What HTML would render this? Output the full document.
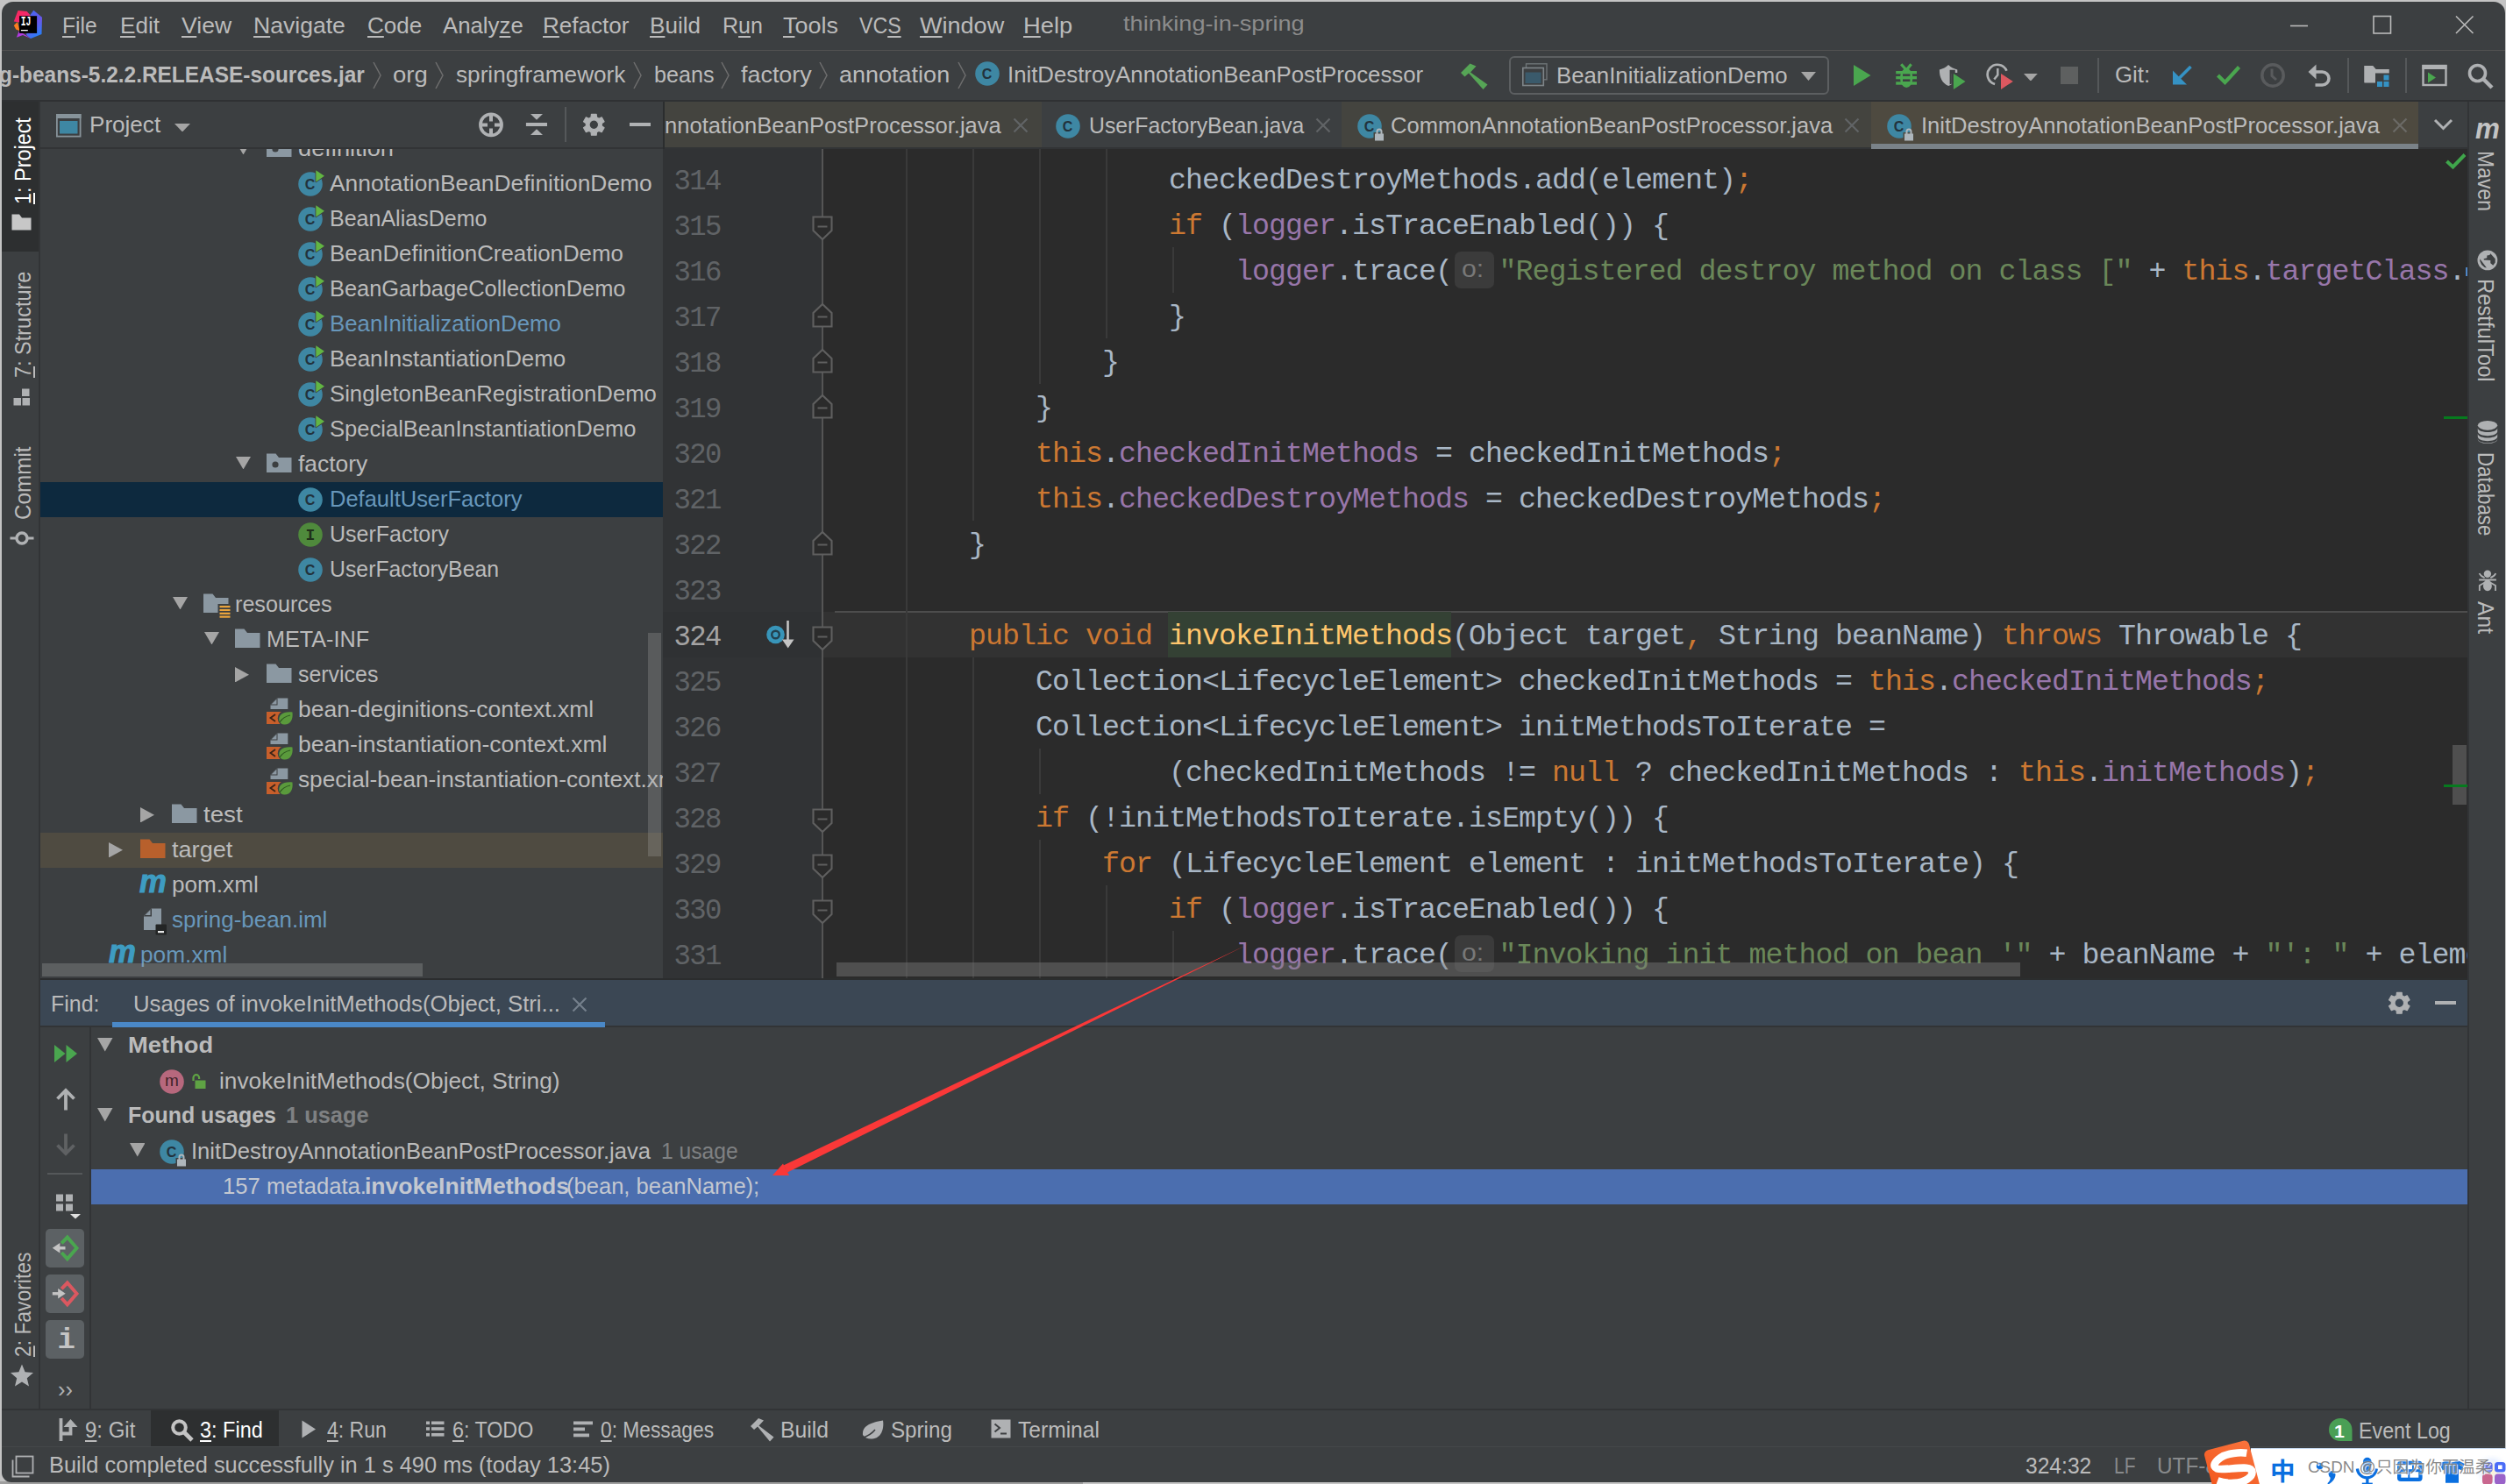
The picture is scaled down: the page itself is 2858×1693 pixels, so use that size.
<!DOCTYPE html>
<html lang="en"><head><meta charset="utf-8"><title>thinking-in-spring</title><style>
html,body{margin:0;padding:0;}
body{width:2858px;height:1693px;overflow:hidden;background:#c4c4c4;position:relative;font-family:'Liberation Sans', sans-serif;}
#root{position:absolute;left:0;top:0;width:2858px;height:1693px;overflow:hidden;}
#root div,#root svg,#root span.t{position:absolute;}
span.t{white-space:pre;line-height:1;transform-origin:0 0;}
span.t u{text-decoration-thickness:1.5px;text-underline-offset:3px;}
div.c{white-space:pre;font-family:'Liberation Mono', monospace;font-size:33.3px;letter-spacing:-0.9833px;line-height:52px;height:52px;color:#a9b7c6;}
div.c span{position:static;}
</style></head>
<body><div id="root">
<div style="left:0px;top:1690px;width:1235px;height:3px;background:#9e9e9e;"></div>
<div style="left:2px;top:2px;width:2855px;height:1689px;background:#3c3f41;border-radius:13px 13px 0 11px;"></div>
<div style="left:2px;top:57px;width:2855px;height:1px;background:#515151;"></div>
<div style="left:2px;top:114px;width:2855px;height:2px;background:#2f3133;"></div>
<span class="t" style="left:71.3px;top:15.99px;font-size:26px;color:#bbbbbb;font-family:'Liberation Sans', sans-serif;transform:scaleX(0.9452);"><u>F</u>ile</span>
<span class="t" style="left:136.8px;top:15.99px;font-size:26px;color:#bbbbbb;font-family:'Liberation Sans', sans-serif;transform:scaleX(1.0044);"><u>E</u>dit</span>
<span class="t" style="left:206.8px;top:15.99px;font-size:26px;color:#bbbbbb;font-family:'Liberation Sans', sans-serif;transform:scaleX(1.0214);"><u>V</u>iew</span>
<span class="t" style="left:288.8px;top:15.99px;font-size:26px;color:#bbbbbb;font-family:'Liberation Sans', sans-serif;transform:scaleX(1.0214);"><u>N</u>avigate</span>
<span class="t" style="left:418.8px;top:15.99px;font-size:26px;color:#bbbbbb;font-family:'Liberation Sans', sans-serif;transform:scaleX(1.0032);"><u>C</u>ode</span>
<span class="t" style="left:504.8px;top:15.99px;font-size:26px;color:#bbbbbb;font-family:'Liberation Sans', sans-serif;transform:scaleX(0.9914);">Analy<u>z</u>e</span>
<span class="t" style="left:618.8px;top:15.99px;font-size:26px;color:#bbbbbb;font-family:'Liberation Sans', sans-serif;transform:scaleX(1.0020);"><u>R</u>efactor</span>
<span class="t" style="left:741.3px;top:15.99px;font-size:26px;color:#bbbbbb;font-family:'Liberation Sans', sans-serif;transform:scaleX(1.0034);"><u>B</u>uild</span>
<span class="t" style="left:823.8px;top:15.99px;font-size:26px;color:#bbbbbb;font-family:'Liberation Sans', sans-serif;transform:scaleX(0.9625);">R<u>u</u>n</span>
<span class="t" style="left:892.8px;top:15.99px;font-size:26px;color:#bbbbbb;font-family:'Liberation Sans', sans-serif;transform:scaleX(1.0361);"><u>T</u>ools</span>
<span class="t" style="left:979.8px;top:15.99px;font-size:26px;color:#bbbbbb;font-family:'Liberation Sans', sans-serif;transform:scaleX(0.8906);">VC<u>S</u></span>
<span class="t" style="left:1049.3px;top:15.99px;font-size:26px;color:#bbbbbb;font-family:'Liberation Sans', sans-serif;transform:scaleX(1.0402);"><u>W</u>indow</span>
<span class="t" style="left:1167.3px;top:15.99px;font-size:26px;color:#bbbbbb;font-family:'Liberation Sans', sans-serif;transform:scaleX(1.0509);"><u>H</u>elp</span>
<span class="t" style="left:1280.8px;top:15.26px;font-size:24.5px;color:#8c8c8c;font-family:'Liberation Sans', sans-serif;transform:scaleX(1.1080);">thinking-in-spring</span>
<svg style="left:2604px;top:10px;" width="230" height="38" viewBox="0 0 230 38"><g stroke="#bbbbbb" stroke-width="1.6" fill="none"><path d="M8 19.5H28"/><rect x="103" y="8.5" width="19.5" height="19.5"/><path d="M197 8.5L216.5 28M216.5 8.5L197 28"/></g></svg>
<svg style="left:14px;top:9px;" width="38" height="38" viewBox="0 0 38 38"><defs><linearGradient id="lg1" x1="0" y1="0" x2="1" y2="1"><stop offset="0" stop-color="#fe2857"/><stop offset="1" stop-color="#e6287f"/></linearGradient><linearGradient id="lg2" x1="0" y1="0" x2="0.4" y2="1"><stop offset="0" stop-color="#3b6cf2"/><stop offset="0.6" stop-color="#6a56e8"/><stop offset="1" stop-color="#2e7bf5"/></linearGradient></defs><path d="M6.5 3L16.7 4L21.5 9.5L8 16.5L1.8 15.5Z" fill="url(#lg1)"/><path d="M1.8 20.1L6 15.9L8.5 26.2L4.2 24.4Z" fill="#fc7e1f"/><path d="M24.3 2.8L34 10.8L33.5 30L21 35L16 31L20.5 8Z" fill="url(#lg2)"/><path d="M4.8 33.7L7.8 26.2L21.2 34.9L12 31Z" fill="#b13be0"/><rect x="8.1" y="9.2" width="20" height="19.7" fill="#000000"/><text x="9.7" y="20.1" font-family="Liberation Mono, monospace" font-weight="700" font-size="14" fill="#ffffff" textLength="11.8" lengthAdjust="spacingAndGlyphs">IJ</text><rect x="9.9" y="25" width="7.9" height="1.3" fill="#ffffff"/></svg>
<span class="t" style="left:-1.2px;top:71.99px;font-size:26px;color:#bbbbbb;font-family:'Liberation Sans', sans-serif;font-weight:700;transform:scaleX(0.9396);">g-beans-5.2.2.RELEASE-sources.jar</span>
<span class="t" style="left:447.8px;top:71.99px;font-size:26px;color:#bbbbbb;font-family:'Liberation Sans', sans-serif;transform:scaleX(1.0579);">org</span>
<span class="t" style="left:519.8px;top:71.99px;font-size:26px;color:#bbbbbb;font-family:'Liberation Sans', sans-serif;transform:scaleX(1.0062);">springframework</span>
<span class="t" style="left:745.8px;top:71.99px;font-size:26px;color:#bbbbbb;font-family:'Liberation Sans', sans-serif;transform:scaleX(0.9676);">beans</span>
<span class="t" style="left:845.3px;top:71.99px;font-size:26px;color:#bbbbbb;font-family:'Liberation Sans', sans-serif;transform:scaleX(1.0346);">factory</span>
<span class="t" style="left:957.3px;top:71.99px;font-size:26px;color:#bbbbbb;font-family:'Liberation Sans', sans-serif;transform:scaleX(1.0388);">annotation</span>
<span class="t" style="left:1148.8px;top:71.99px;font-size:26px;color:#bbbbbb;font-family:'Liberation Sans', sans-serif;transform:scaleX(0.9910);">InitDestroyAnnotationBeanPostProcessor</span>
<svg style="left:424px;top:70px;" width="12" height="32" viewBox="0 0 12 32"><path d="M2 1L10 16L2 31" stroke="#6e6e6e" stroke-width="1.5" fill="none"/></svg>
<svg style="left:495px;top:70px;" width="12" height="32" viewBox="0 0 12 32"><path d="M2 1L10 16L2 31" stroke="#6e6e6e" stroke-width="1.5" fill="none"/></svg>
<svg style="left:721px;top:70px;" width="12" height="32" viewBox="0 0 12 32"><path d="M2 1L10 16L2 31" stroke="#6e6e6e" stroke-width="1.5" fill="none"/></svg>
<svg style="left:821px;top:70px;" width="12" height="32" viewBox="0 0 12 32"><path d="M2 1L10 16L2 31" stroke="#6e6e6e" stroke-width="1.5" fill="none"/></svg>
<svg style="left:933px;top:70px;" width="12" height="32" viewBox="0 0 12 32"><path d="M2 1L10 16L2 31" stroke="#6e6e6e" stroke-width="1.5" fill="none"/></svg>
<svg style="left:1091px;top:70px;" width="12" height="32" viewBox="0 0 12 32"><path d="M2 1L10 16L2 31" stroke="#6e6e6e" stroke-width="1.5" fill="none"/></svg>
<svg style="left:1106.0px;top:64.0px;" width="40" height="40" viewBox="0 0 40 40"><circle cx="20.0" cy="20.0" r="13.8" fill="#3e87a3"/><text x="19.6" y="25.7" text-anchor="middle" font-family="Liberation Sans, sans-serif" font-size="16" fill="#22323c" font-weight="700">C</text></svg>
<svg style="left:1664px;top:70px;" width="36" height="32" viewBox="0 0 36 32"><g transform="translate(1.5,2)"><path d="M0.5 11L11 0.5L18 3.5L11.5 10.5L31 24.5L26 30L9.5 11.5L5 15.5Z" fill="#56a556"/></g></svg>
<div style="left:1720.5px;top:64px;width:365px;height:44px;border:2px solid #5c5f61;border-radius:6px;box-sizing:border-box;"></div>
<svg style="left:1736px;top:72px;" width="30" height="28" viewBox="0 0 30 28"><rect x="4.5" y="0.8" width="23.5" height="18" fill="none" stroke="#6e7477" stroke-width="1.4"/><rect x="0.8" y="5.5" width="23.5" height="20" fill="#3c3f41" stroke="#7e8589" stroke-width="1.6"/><rect x="3.5" y="10.5" width="18" height="12.5" fill="#3a5a6b"/></svg>
<span class="t" style="left:1774.8px;top:72.99px;font-size:26px;color:#bbbbbb;font-family:'Liberation Sans', sans-serif;transform:scaleX(0.9914);">BeanInitializationDemo</span>
<svg style="left:2054px;top:82.0px;" width="17" height="10" viewBox="0 0 17 10"><path d="M0 0H17L8.5 10Z" fill="#a5a5a5"/></svg>
<svg style="left:2112px;top:72px;" width="24" height="28" viewBox="0 0 24 28"><path d="M2 2L21.5 14L2 26Z" fill="#4aa64f"/></svg>
<svg style="left:2160px;top:70px;" width="30" height="32" viewBox="0 0 30 32"><g fill="#4aa64f"><ellipse cx="14.2" cy="19" rx="7.2" ry="11.1"/><rect x="2.2" y="11" width="23.8" height="3.3"/><rect x="2.2" y="17" width="23.8" height="3.3"/><rect x="2.2" y="23.300" width="23.800" height="3.400"/><path d="M8.2 3.2L13.6 9.2M19.6 3.2L14.8 9.2" stroke="#4aa64f" stroke-width="3.2"/></g><rect x="10" y="14.4" width="8.4" height="2.5" fill="#3c3f41"/><rect x="10" y="20.4" width="8.4" height="2.6" fill="#3c3f41"/></svg>
<svg style="left:2210px;top:70px;" width="34" height="34" viewBox="0 0 34 34"><path d="M1.9 9.5C6 8.5 9 7 12.1 4.1C15 7 18.5 8.5 22.3 9.5V13H15.5V26.500L12.1 28.1C5 24.5 1.9 19 1.9 9.5Z" fill="#afb1b3"/><path d="M13.6 9.8H19.8V14H15.800V25.500L13.600 26.600Z" fill="#3c3f41"/><path d="M17.9 13.9L31.5 22.9L17.9 31.900Z" fill="#4aa64f" stroke="#3c3f41" stroke-width="1.6" paint-order="stroke"/></svg>
<svg style="left:2264px;top:70px;" width="34" height="34" viewBox="0 0 34 34"><path d="M24.48 10.87A11.3 11.3 0 1 0 11.08 26.01" stroke="#afb1b3" stroke-width="2.7" fill="none"/><path d="M14.3 8V15.5L10.300 20.500" stroke="#afb1b3" stroke-width="2.500" fill="none"/><path d="M18 13.900L31.800 22.900L18 31.900Z" fill="#db5860" stroke="#3c3f41" stroke-width="1.600" paint-order="stroke"/></svg>
<svg style="left:2307.8px;top:83.9px;" width="15.8" height="8.6" viewBox="0 0 15.8 8.6"><path d="M0 0H15.8L7.9 8.6Z" fill="#a5a5a5"/></svg>
<div style="left:2349.7px;top:76px;width:20px;height:20px;background:#5e6060;"></div>
<div style="left:2392px;top:66px;width:2px;height:40px;background:#55585a;"></div>
<span class="t" style="left:2411.8px;top:71.99px;font-size:26px;color:#bbbbbb;font-family:'Liberation Sans', sans-serif;transform:scaleX(0.9925);">Git:</span>
<svg style="left:2476px;top:72px;" width="28" height="28" viewBox="0 0 28 28"><path d="M22.5 4L6 20.5" stroke="#3592c4" stroke-width="3.6" fill="none"/><path d="M2 8.5V24.5H18Z" fill="#3592c4"/></svg>
<svg style="left:2526px;top:72px;" width="32" height="28" viewBox="0 0 32 28"><path d="M3.5 14L11.5 22L27.5 4.5" stroke="#4aa64f" stroke-width="4.2" fill="none"/></svg>
<svg style="left:2576px;top:70px;" width="32" height="32" viewBox="0 0 32 32"><circle cx="16" cy="16" r="12.2" stroke="#595b5d" stroke-width="3.5" fill="none"/><path d="M15 8.5V16.500L20 21" stroke="#595b5d" stroke-width="3" fill="none"/></svg>
<svg style="left:2630px;top:70px;" width="32" height="32" viewBox="0 0 32 32"><path d="M7 12H18.500A7.500 7.500 0 0 1 18.500 27H10.500" stroke="#afb1b3" stroke-width="3.6" fill="none"/><path d="M2.5 12L11.5 3.5V20.5Z" fill="#afb1b3"/></svg>
<div style="left:2677px;top:66px;width:2px;height:40px;background:#55585a;"></div>
<svg style="left:2695px;top:72px;" width="32" height="30" viewBox="0 0 32 30"><path d="M1.5 3H11L14.5 7H29.5V12H14V22H1.5Z" fill="#afb1b3"/><path d="M1.5 3H11L14.5 7H29.5V22.5H1.5Z" fill="#afb1b3"/><rect x="14" y="11.5" width="17" height="17" fill="#3c3f41"/><rect x="23.5" y="13.5" width="6" height="6" fill="#3592c4"/><rect x="16" y="21" width="6" height="6" fill="#3592c4"/><rect x="23.5" y="21" width="6" height="6" fill="#3592c4"/></svg>
<div style="left:2742.5px;top:66px;width:2px;height:40px;background:#55585a;"></div>
<svg style="left:2761px;top:72px;" width="32" height="28" viewBox="0 0 32 28"><rect x="2.5" y="3" width="26" height="22" fill="none" stroke="#afb1b3" stroke-width="2.4"/><rect x="1.5" y="2" width="28" height="5" fill="#afb1b3"/><path d="M8 10.5L17 16.5L8 22.5Z" fill="#4aa64f"/></svg>
<svg style="left:2812px;top:70px;" width="34" height="34" viewBox="0 0 34 34"><circle cx="13.5" cy="13.5" r="9" stroke="#afb1b3" stroke-width="3.6" fill="none"/><path d="M20 20L30 30" stroke="#afb1b3" stroke-width="4.4"/></svg>
<div style="left:2px;top:116px;width:42px;height:171px;background:#2d2f30;"></div>
<div style="left:44px;top:116px;width:2px;height:1491px;background:#323436;"></div>
<span class="t" style="left:13.0px;top:233px;font-size:26px;color:#ffffff;font-family:'Liberation Sans', sans-serif;transform:rotate(-90deg) scaleX(0.9000);"><u>1</u>: Project</span>
<svg style="left:13px;top:243.5px;" width="24" height="20" viewBox="0 0 24 20"><path d="M0.5 0.5H9L12 4.5H22.5V18.5H0.5Z" fill="#c7c7c7"/></svg>
<span class="t" style="left:13.0px;top:431px;font-size:26px;color:#bbbbbb;font-family:'Liberation Sans', sans-serif;transform:rotate(-90deg) scaleX(0.9030);"><u>7</u>: Structure</span>
<svg style="left:15px;top:443px;" width="20" height="20" viewBox="0 0 20 20"><rect x="10" y="0.5" width="8.5" height="8.5" fill="#afb1b3"/><rect x="0.5" y="11" width="8.5" height="8.5" fill="#afb1b3"/><rect x="10.5" y="11" width="8.5" height="8.5" fill="#afb1b3"/></svg>
<span class="t" style="left:13.0px;top:593px;font-size:26px;color:#bbbbbb;font-family:'Liberation Sans', sans-serif;transform:rotate(-90deg) scaleX(0.9333);">Commit</span>
<svg style="left:11px;top:604px;" width="28" height="20" viewBox="0 0 28 20"><circle cx="14" cy="10" r="6" stroke="#afb1b3" stroke-width="3.4" fill="none"/><path d="M0.5 10H7M21 10H27.5" stroke="#afb1b3" stroke-width="3"/></svg>
<span class="t" style="left:13.0px;top:1548px;font-size:26px;color:#bbbbbb;font-family:'Liberation Sans', sans-serif;transform:rotate(-90deg) scaleX(0.8787);"><u>2</u>: Favorites</span>
<svg style="left:11px;top:1556px;" width="28" height="26" viewBox="0 0 28 26"><path d="M14 0.5L17.6 9.3L27 10L19.8 16.2L22 25.5L14 20.5L6 25.5L8.2 16.2L1 10L10.4 9.3Z" fill="#afb1b3"/></svg>
<div style="left:46px;top:550px;width:710px;height:40px;background:#0d293e;"></div>
<div style="left:46px;top:950px;width:710px;height:40px;background:#4f4b41;"></div>
<svg style="left:269px;top:161.75px;" width="17" height="14.5" viewBox="0 0 17 14.5"><path d="M0 0H17L8.5 14.5Z" fill="#a5a5a5"/></svg>
<svg style="left:304px;top:155.3px;" width="34" height="34" viewBox="0 0 34 34"><path d="M0 2.5H10.5L14 7H28.5V24H0Z" fill="#8b98a2"/><circle cx="10" cy="15" r="3.6" fill="#3c3f41"/></svg>
<span class="t" style="left:339.8px;top:157.04px;font-size:25.7px;color:#bbbbbb;font-family:'Liberation Sans', sans-serif;transform:scaleX(1.0602);">definition</span>
<svg style="left:334.0px;top:190.0px;" width="40" height="40" viewBox="0 0 40 40"><circle cx="20.0" cy="20.0" r="13.8" fill="#3e87a3"/><text x="19.6" y="25.7" text-anchor="middle" font-family="Liberation Sans, sans-serif" font-size="16" fill="#22323c" font-weight="700">C</text><path d="M26.3 4.199999999999999L36.0 10.8L26.3 17.4Z" fill="#62b543" stroke="#3c3f41" stroke-width="1.6" stroke-linejoin="round" paint-order="stroke"/></svg>
<span class="t" style="left:375.8px;top:197.04px;font-size:25.7px;color:#bbbbbb;font-family:'Liberation Sans', sans-serif;transform:scaleX(1.0257);">AnnotationBeanDefinitionDemo</span>
<svg style="left:334.0px;top:230.0px;" width="40" height="40" viewBox="0 0 40 40"><circle cx="20.0" cy="20.0" r="13.8" fill="#3e87a3"/><text x="19.6" y="25.7" text-anchor="middle" font-family="Liberation Sans, sans-serif" font-size="16" fill="#22323c" font-weight="700">C</text><path d="M26.3 4.199999999999999L36.0 10.8L26.3 17.4Z" fill="#62b543" stroke="#3c3f41" stroke-width="1.6" stroke-linejoin="round" paint-order="stroke"/></svg>
<span class="t" style="left:375.8px;top:237.04px;font-size:25.7px;color:#bbbbbb;font-family:'Liberation Sans', sans-serif;transform:scaleX(0.9739);">BeanAliasDemo</span>
<svg style="left:334.0px;top:270.0px;" width="40" height="40" viewBox="0 0 40 40"><circle cx="20.0" cy="20.0" r="13.8" fill="#3e87a3"/><text x="19.6" y="25.7" text-anchor="middle" font-family="Liberation Sans, sans-serif" font-size="16" fill="#22323c" font-weight="700">C</text><path d="M26.3 4.199999999999999L36.0 10.8L26.3 17.4Z" fill="#62b543" stroke="#3c3f41" stroke-width="1.6" stroke-linejoin="round" paint-order="stroke"/></svg>
<span class="t" style="left:375.8px;top:277.04px;font-size:25.7px;color:#bbbbbb;font-family:'Liberation Sans', sans-serif;transform:scaleX(1.0066);">BeanDefinitionCreationDemo</span>
<svg style="left:334.0px;top:310.0px;" width="40" height="40" viewBox="0 0 40 40"><circle cx="20.0" cy="20.0" r="13.8" fill="#3e87a3"/><text x="19.6" y="25.7" text-anchor="middle" font-family="Liberation Sans, sans-serif" font-size="16" fill="#22323c" font-weight="700">C</text><path d="M26.3 4.199999999999999L36.0 10.8L26.3 17.4Z" fill="#62b543" stroke="#3c3f41" stroke-width="1.6" stroke-linejoin="round" paint-order="stroke"/></svg>
<span class="t" style="left:375.8px;top:317.04px;font-size:25.7px;color:#bbbbbb;font-family:'Liberation Sans', sans-serif;transform:scaleX(0.9889);">BeanGarbageCollectionDemo</span>
<svg style="left:334.0px;top:350.0px;" width="40" height="40" viewBox="0 0 40 40"><circle cx="20.0" cy="20.0" r="13.8" fill="#3e87a3"/><text x="19.6" y="25.7" text-anchor="middle" font-family="Liberation Sans, sans-serif" font-size="16" fill="#22323c" font-weight="700">C</text><path d="M26.3 4.199999999999999L36.0 10.8L26.3 17.4Z" fill="#62b543" stroke="#3c3f41" stroke-width="1.6" stroke-linejoin="round" paint-order="stroke"/></svg>
<span class="t" style="left:375.8px;top:357.04px;font-size:25.7px;color:#6897bb;font-family:'Liberation Sans', sans-serif;transform:scaleX(1.0046);">BeanInitializationDemo</span>
<svg style="left:334.0px;top:390.0px;" width="40" height="40" viewBox="0 0 40 40"><circle cx="20.0" cy="20.0" r="13.8" fill="#3e87a3"/><text x="19.6" y="25.7" text-anchor="middle" font-family="Liberation Sans, sans-serif" font-size="16" fill="#22323c" font-weight="700">C</text><path d="M26.3 4.199999999999999L36.0 10.8L26.3 17.4Z" fill="#62b543" stroke="#3c3f41" stroke-width="1.6" stroke-linejoin="round" paint-order="stroke"/></svg>
<span class="t" style="left:375.8px;top:397.04px;font-size:25.7px;color:#bbbbbb;font-family:'Liberation Sans', sans-serif;transform:scaleX(1.0082);">BeanInstantiationDemo</span>
<svg style="left:334.0px;top:430.0px;" width="40" height="40" viewBox="0 0 40 40"><circle cx="20.0" cy="20.0" r="13.8" fill="#3e87a3"/><text x="19.6" y="25.7" text-anchor="middle" font-family="Liberation Sans, sans-serif" font-size="16" fill="#22323c" font-weight="700">C</text><path d="M26.3 4.199999999999999L36.0 10.8L26.3 17.4Z" fill="#62b543" stroke="#3c3f41" stroke-width="1.6" stroke-linejoin="round" paint-order="stroke"/></svg>
<span class="t" style="left:375.8px;top:437.04px;font-size:25.7px;color:#bbbbbb;font-family:'Liberation Sans', sans-serif;transform:scaleX(1.0005);">SingletonBeanRegistrationDemo</span>
<svg style="left:334.0px;top:470.0px;" width="40" height="40" viewBox="0 0 40 40"><circle cx="20.0" cy="20.0" r="13.8" fill="#3e87a3"/><text x="19.6" y="25.7" text-anchor="middle" font-family="Liberation Sans, sans-serif" font-size="16" fill="#22323c" font-weight="700">C</text><path d="M26.3 4.199999999999999L36.0 10.8L26.3 17.4Z" fill="#62b543" stroke="#3c3f41" stroke-width="1.6" stroke-linejoin="round" paint-order="stroke"/></svg>
<span class="t" style="left:375.8px;top:477.04px;font-size:25.7px;color:#bbbbbb;font-family:'Liberation Sans', sans-serif;transform:scaleX(0.9949);">SpecialBeanInstantiationDemo</span>
<svg style="left:269px;top:520.75px;" width="17" height="14.5" viewBox="0 0 17 14.5"><path d="M0 0H17L8.5 14.5Z" fill="#a5a5a5"/></svg>
<svg style="left:304px;top:515.3px;" width="34" height="34" viewBox="0 0 34 34"><path d="M0 2.5H10.5L14 7H28.5V24H0Z" fill="#8b98a2"/><circle cx="10" cy="15" r="3.6" fill="#3c3f41"/></svg>
<span class="t" style="left:339.8px;top:517.04px;font-size:25.7px;color:#bbbbbb;font-family:'Liberation Sans', sans-serif;transform:scaleX(1.0286);">factory</span>
<svg style="left:334.0px;top:550.0px;" width="40" height="40" viewBox="0 0 40 40"><circle cx="20.0" cy="20.0" r="13.8" fill="#3e87a3"/><text x="19.6" y="25.7" text-anchor="middle" font-family="Liberation Sans, sans-serif" font-size="16" fill="#22323c" font-weight="700">C</text></svg>
<span class="t" style="left:375.8px;top:557.04px;font-size:25.7px;color:#6897bb;font-family:'Liberation Sans', sans-serif;transform:scaleX(0.9919);">DefaultUserFactory</span>
<svg style="left:334.0px;top:590.0px;" width="40" height="40" viewBox="0 0 40 40"><circle cx="20.0" cy="20.0" r="13.8" fill="#4f8a3c"/><text x="20.0" y="26.0" text-anchor="middle" font-family="Liberation Mono, monospace" font-size="18" fill="#20301a" font-weight="700">I</text></svg>
<span class="t" style="left:375.8px;top:597.04px;font-size:25.7px;color:#bbbbbb;font-family:'Liberation Sans', sans-serif;transform:scaleX(0.9729);">UserFactory</span>
<svg style="left:334.0px;top:630.0px;" width="40" height="40" viewBox="0 0 40 40"><circle cx="20.0" cy="20.0" r="13.8" fill="#3e87a3"/><text x="19.6" y="25.7" text-anchor="middle" font-family="Liberation Sans, sans-serif" font-size="16" fill="#22323c" font-weight="700">C</text></svg>
<span class="t" style="left:375.8px;top:637.04px;font-size:25.7px;color:#bbbbbb;font-family:'Liberation Sans', sans-serif;transform:scaleX(0.9660);">UserFactoryBean</span>
<svg style="left:197px;top:680.75px;" width="17" height="14.5" viewBox="0 0 17 14.5"><path d="M0 0H17L8.5 14.5Z" fill="#a5a5a5"/></svg>
<svg style="left:232px;top:675.3px;" width="34" height="34" viewBox="0 0 34 34"><path d="M0 2.5H10.5L14 7H28.5V24H0Z" fill="#8b98a2"/><rect x="16.5" y="14" width="15" height="17" fill="#3c3f41"/><path d="M18.5 17.2h12M18.5 21h12M18.5 24.800h12M18.500 28.600h12" stroke="#e8a33d" stroke-width="2.2"/></svg>
<span class="t" style="left:267.8px;top:677.04px;font-size:25.7px;color:#bbbbbb;font-family:'Liberation Sans', sans-serif;transform:scaleX(0.9796);">resources</span>
<svg style="left:232.5px;top:720.75px;" width="17" height="14.5" viewBox="0 0 17 14.5"><path d="M0 0H17L8.5 14.5Z" fill="#a5a5a5"/></svg>
<svg style="left:268px;top:715.3px;" width="34" height="34" viewBox="0 0 34 34"><path d="M0 2.5H10.5L14 7H28.5V24H0Z" fill="#8b98a2"/></svg>
<span class="t" style="left:304.3px;top:717.04px;font-size:25.7px;color:#bbbbbb;font-family:'Liberation Sans', sans-serif;transform:scaleX(0.9807);">META-INF</span>
<svg style="left:268px;top:760.75px;" width="16" height="17.5" viewBox="0 0 16 17.5"><path d="M0 0L16 8.75L0 17.5Z" fill="#a5a5a5"/></svg>
<svg style="left:304px;top:755.3px;" width="34" height="34" viewBox="0 0 34 34"><path d="M0 2.5H10.5L14 7H28.5V24H0Z" fill="#8b98a2"/></svg>
<span class="t" style="left:339.8px;top:757.04px;font-size:25.7px;color:#bbbbbb;font-family:'Liberation Sans', sans-serif;transform:scaleX(0.9702);">services</span>
<svg style="left:304px;top:796px;" width="32" height="32" viewBox="0 0 32 32"><path d="M4.5 8L12 0.5H24.300V13H4.500Z" fill="#8b98a2"/><path d="M4 8.5L12.5 0V8.5Z" fill="#3c3f41"/><path d="M5.5 7.5L11.5 1.5V7.5Z" fill="#8b98a2"/><rect x="0" y="16" width="19" height="14" fill="#c75f2b"/><path d="M10 19L4.5 23L10 27" stroke="#3a2418" stroke-width="1.8" fill="none"/><circle cx="22" cy="23.5" r="9.3" fill="#3c3f41"/><path d="M14.5 27C13 20 18 15.5 29.5 16.5C30.5 25 27 31 20 30.5C17.5 30.3 15.5 29 14.5 27Z" fill="#5a9a3c"/><path d="M15 28C18 23 22 21 27 20" stroke="#2f5a22" stroke-width="1.2" fill="none"/></svg>
<span class="t" style="left:339.8px;top:797.04px;font-size:25.7px;color:#bbbbbb;font-family:'Liberation Sans', sans-serif;transform:scaleX(1.0312);">bean-deginitions-context.xml</span>
<svg style="left:304px;top:836px;" width="32" height="32" viewBox="0 0 32 32"><path d="M4.5 8L12 0.5H24.300V13H4.500Z" fill="#8b98a2"/><path d="M4 8.5L12.5 0V8.5Z" fill="#3c3f41"/><path d="M5.5 7.5L11.5 1.5V7.5Z" fill="#8b98a2"/><rect x="0" y="16" width="19" height="14" fill="#c75f2b"/><path d="M10 19L4.5 23L10 27" stroke="#3a2418" stroke-width="1.8" fill="none"/><circle cx="22" cy="23.5" r="9.3" fill="#3c3f41"/><path d="M14.5 27C13 20 18 15.5 29.5 16.5C30.5 25 27 31 20 30.5C17.5 30.3 15.5 29 14.5 27Z" fill="#5a9a3c"/><path d="M15 28C18 23 22 21 27 20" stroke="#2f5a22" stroke-width="1.2" fill="none"/></svg>
<span class="t" style="left:339.8px;top:837.04px;font-size:25.7px;color:#bbbbbb;font-family:'Liberation Sans', sans-serif;transform:scaleX(1.0328);">bean-instantiation-context.xml</span>
<svg style="left:304px;top:876px;" width="32" height="32" viewBox="0 0 32 32"><path d="M4.5 8L12 0.5H24.300V13H4.500Z" fill="#8b98a2"/><path d="M4 8.5L12.5 0V8.5Z" fill="#3c3f41"/><path d="M5.5 7.5L11.5 1.5V7.5Z" fill="#8b98a2"/><rect x="0" y="16" width="19" height="14" fill="#c75f2b"/><path d="M10 19L4.5 23L10 27" stroke="#3a2418" stroke-width="1.8" fill="none"/><circle cx="22" cy="23.5" r="9.3" fill="#3c3f41"/><path d="M14.5 27C13 20 18 15.5 29.5 16.5C30.5 25 27 31 20 30.5C17.5 30.3 15.5 29 14.5 27Z" fill="#5a9a3c"/><path d="M15 28C18 23 22 21 27 20" stroke="#2f5a22" stroke-width="1.2" fill="none"/></svg>
<span class="t" style="left:339.8px;top:877.04px;font-size:25.7px;color:#bbbbbb;font-family:'Liberation Sans', sans-serif;transform:scaleX(1.0202);">special-bean-instantiation-context.xml</span>
<svg style="left:160px;top:920.75px;" width="16" height="17.5" viewBox="0 0 16 17.5"><path d="M0 0L16 8.75L0 17.5Z" fill="#a5a5a5"/></svg>
<svg style="left:196px;top:915.3px;" width="34" height="34" viewBox="0 0 34 34"><path d="M0 2.5H10.5L14 7H28.5V24H0Z" fill="#8b98a2"/></svg>
<span class="t" style="left:231.8px;top:917.04px;font-size:25.7px;color:#bbbbbb;font-family:'Liberation Sans', sans-serif;transform:scaleX(1.0780);">test</span>
<svg style="left:124px;top:960.75px;" width="16" height="17.5" viewBox="0 0 16 17.5"><path d="M0 0L16 8.75L0 17.5Z" fill="#a5a5a5"/></svg>
<svg style="left:160px;top:955.3px;" width="34" height="34" viewBox="0 0 34 34"><path d="M0 2.5H10.5L14 7H28.5V24H0Z" fill="#b8602c"/></svg>
<span class="t" style="left:196.3px;top:957.04px;font-size:25.7px;color:#bbbbbb;font-family:'Liberation Sans', sans-serif;transform:scaleX(1.0561);">target</span>
<span class="t" style="left:159px;top:988.40px;font-size:36.5px;color:#3e9cc2;font-family:'Liberation Sans', sans-serif;font-weight:700;font-style:italic;-webkit-text-stroke:1.1px #3e9cc2;transform:scaleX(0.95);">m</span>
<span class="t" style="left:196.3px;top:997.04px;font-size:25.7px;color:#bbbbbb;font-family:'Liberation Sans', sans-serif;transform:scaleX(1.0175);">pom.xml</span>
<svg style="left:163px;top:1036px;" width="30" height="32" viewBox="0 0 30 32"><path d="M1 9L9.5 0.5H21V25H1Z" fill="#8b98a2"/><path d="M0.5 9.5L10 0V9.5Z" fill="#3c3f41"/><path d="M2.5 8L8.5 2V8Z" fill="#8b98a2"/><rect x="14.5" y="18.5" width="12.5" height="12" rx="1" fill="#232525"/><rect x="17" y="26" width="7" height="2.2" fill="#e8e8e8"/></svg>
<span class="t" style="left:196.3px;top:1037.04px;font-size:25.7px;color:#6897bb;font-family:'Liberation Sans', sans-serif;transform:scaleX(1.0097);">spring-bean.iml</span>
<span class="t" style="left:123.5px;top:1068.40px;font-size:36.5px;color:#3e9cc2;font-family:'Liberation Sans', sans-serif;font-weight:700;font-style:italic;-webkit-text-stroke:1.1px #3e9cc2;transform:scaleX(0.95);">m</span>
<span class="t" style="left:159.8px;top:1077.04px;font-size:25.7px;color:#6897bb;font-family:'Liberation Sans', sans-serif;transform:scaleX(1.0227);">pom.xml</span>
<div style="left:739px;top:722px;width:15px;height:255px;background:rgba(166,166,166,0.28);"></div>
<div style="left:48px;top:1098.5px;width:434px;height:15.5px;background:rgba(170,170,170,0.3);"></div>
<div style="left:46px;top:116px;width:710px;height:52px;background:#3c3f41;"></div>
<svg style="left:64px;top:130px;" width="29" height="27" viewBox="0 0 29 27"><rect x="0" y="0" width="28.5" height="26.5" fill="#87939a"/><rect x="1.8" y="1.8" width="24.9" height="22.9" fill="#3c3f41"/><rect x="0" y="0" width="28.5" height="5" fill="#87939a"/><rect x="4" y="8" width="20.5" height="14.5" fill="#3e87a3"/></svg>
<span class="t" style="left:101.8px;top:128.99px;font-size:26px;color:#bbbbbb;font-family:'Liberation Sans', sans-serif;transform:scaleX(1.0025);">Project</span>
<svg style="left:199px;top:140.75px;" width="18" height="9.5" viewBox="0 0 18 9.5"><path d="M0 0H18L9.0 9.5Z" fill="#a5a5a5"/></svg>
<svg style="left:544px;top:127px;" width="32" height="32" viewBox="0 0 32 32"><circle cx="16" cy="15.400" r="12.100" stroke="#afb1b3" stroke-width="3.600" fill="none"/><path d="M16 4V11.400M16 19.400V27M4 15.400H12M20 15.400H28" stroke="#afb1b3" stroke-width="4"/></svg>
<svg style="left:598px;top:128px;" width="28" height="30" viewBox="0 0 28 30"><path d="M1.900 14H26" stroke="#afb1b3" stroke-width="4"/><path d="M7 2H21L14 8.800Z" fill="#afb1b3"/><path d="M7 26H21L14 19.200Z" fill="#afb1b3"/></svg>
<div style="left:644.2px;top:122px;width:2px;height:40px;background:#55585a;"></div>
<svg style="left:663.4000000000001px;top:127.7px;" width="28.6" height="28.6" viewBox="0 0 28.6 28.6"><path fill-rule="evenodd" d="M11.44 2.34L17.16 2.34L17.51 5.78L20.07 7.26L23.23 5.84L26.09 10.80L23.28 12.82L23.28 15.78L26.09 17.80L23.23 22.76L20.07 21.34L17.51 22.82L17.16 26.26L11.44 26.26L11.09 22.82L8.53 21.34L5.37 22.76L2.51 17.80L5.32 15.78L5.32 12.82L2.51 10.80L5.37 5.84L8.53 7.26L11.09 5.78Z M19.59 14.3a5.29 5.29 0 1 0 -10.58 0a5.29 5.29 0 1 0 10.58 0Z" fill="#afb1b3" stroke="#afb1b3" stroke-width="1.2" stroke-linejoin="round"/></svg>
<div style="left:717.6px;top:140px;width:24.4px;height:4.1px;background:#afb1b3;"></div>
<div style="left:46px;top:168px;width:710px;height:2px;background:#323436;"></div>
<div style="left:756px;top:116px;width:2px;height:54px;background:#2b2d2e;"></div>
<div style="left:758px;top:116px;width:2056px;height:52px;background:#3c3f41;"></div>
<div style="left:758px;top:116px;width:430px;height:52px;background:#44443f;"></div>
<div style="left:1530px;top:116px;width:604px;height:52px;background:#44443f;"></div>
<div style="left:2134px;top:116px;width:624px;height:52px;background:#4e4a40;"></div>
<div style="left:758px;top:168px;width:2056px;height:2px;background:#323436;"></div>
<div style="left:2134px;top:164px;width:624px;height:6px;background:#7a8288;"></div>
<div style="left:758px;top:116px;width:430px;height:52px;overflow:hidden;">
<span class="t" style="left:-17.2px;top:13.99px;font-size:26px;color:#bbbbbb;font-family:'Liberation Sans', sans-serif;transform:scaleX(0.9833);">AnnotationBeanPostProcessor.java</span>
</div>
<svg style="left:1155px;top:133.5px;" width="18" height="18" viewBox="0 0 18 18"><path d="M1.5 1.5L16.5 16.5M16.5 1.5L1.5 16.5" stroke="#616466" stroke-width="2.2"/></svg>
<svg style="left:1198.0px;top:123.5px;" width="40" height="40" viewBox="0 0 40 40"><circle cx="20.0" cy="20.0" r="13.8" fill="#3e87a3"/><text x="19.6" y="25.7" text-anchor="middle" font-family="Liberation Sans, sans-serif" font-size="16" fill="#22323c" font-weight="700">C</text></svg>
<span class="t" style="left:1241.8px;top:129.99px;font-size:26px;color:#bbbbbb;font-family:'Liberation Sans', sans-serif;transform:scaleX(0.9541);">UserFactoryBean.java</span>
<svg style="left:1499.5px;top:133.5px;" width="18" height="18" viewBox="0 0 18 18"><path d="M1.5 1.5L16.5 16.5M16.5 1.5L1.5 16.5" stroke="#616466" stroke-width="2.2"/></svg>
<svg style="left:1542.0px;top:123.5px;" width="40" height="40" viewBox="0 0 40 40"><circle cx="20.0" cy="20.0" r="13.8" fill="#3e87a3"/><text x="19.6" y="25.7" text-anchor="middle" font-family="Liberation Sans, sans-serif" font-size="16" fill="#22323c" font-weight="700">C</text><g><rect x="24.5" y="27.0" width="13" height="11" fill="#44443f"/><path d="M28.5 29.0v-3a2.5 2.5 0 0 1 5 0v3" stroke="#aeb6bc" stroke-width="2" fill="none"/><rect x="26.0" y="28.5" width="10" height="8" fill="#aeb6bc"/></g></svg>
<span class="t" style="left:1585.8px;top:129.99px;font-size:26px;color:#bbbbbb;font-family:'Liberation Sans', sans-serif;transform:scaleX(0.9828);">CommonAnnotationBeanPostProcessor.java</span>
<svg style="left:2103px;top:133.5px;" width="18" height="18" viewBox="0 0 18 18"><path d="M1.5 1.5L16.5 16.5M16.5 1.5L1.5 16.5" stroke="#616466" stroke-width="2.2"/></svg>
<svg style="left:2146.0px;top:123.5px;" width="40" height="40" viewBox="0 0 40 40"><circle cx="20.0" cy="20.0" r="13.8" fill="#3e87a3"/><text x="19.6" y="25.7" text-anchor="middle" font-family="Liberation Sans, sans-serif" font-size="16" fill="#22323c" font-weight="700">C</text><g><rect x="24.5" y="27.0" width="13" height="11" fill="#4e4a40"/><path d="M28.5 29.0v-3a2.5 2.5 0 0 1 5 0v3" stroke="#aeb6bc" stroke-width="2" fill="none"/><rect x="26.0" y="28.5" width="10" height="8" fill="#aeb6bc"/></g></svg>
<span class="t" style="left:2190.8px;top:129.99px;font-size:26px;color:#bbbbbb;font-family:'Liberation Sans', sans-serif;transform:scaleX(0.9835);">InitDestroyAnnotationBeanPostProcessor.java</span>
<svg style="left:2727.5px;top:133.5px;" width="18" height="18" viewBox="0 0 18 18"><path d="M1.5 1.5L16.5 16.5M16.5 1.5L1.5 16.5" stroke="#6b6a66" stroke-width="2.2"/></svg>
<svg style="left:2775px;top:135px;" width="24" height="16" viewBox="0 0 24 16"><path d="M2 2L11.5 11.5L21 2" stroke="#afb1b3" stroke-width="3" fill="none"/></svg>
<div style="left:758px;top:170px;width:2056px;height:946px;background:#2b2b2b;"></div>
<div style="left:756px;top:170px;width:182px;height:946px;background:#313335;"></div>
<div style="left:938px;top:698px;width:1876px;height:52px;background:#323232;"></div>
<div style="left:756px;top:698px;width:182px;height:52px;background:#2f3133;"></div>
<div style="left:952px;top:697px;width:1862px;height:1.5px;background:#4d4d4d;"></div>
<div style="left:1033px;top:170px;width:1.5px;height:946px;background:#3a3a3a;"></div>
<div style="left:1109px;top:170px;width:1.5px;height:424px;background:#3a3a3a;"></div>
<div style="left:1109px;top:750px;width:1.5px;height:366px;background:#3a3a3a;"></div>
<div style="left:1185px;top:170px;width:1.5px;height:268px;background:#3a3a3a;"></div>
<div style="left:1185px;top:854px;width:1.5px;height:52px;background:#3a3a3a;"></div>
<div style="left:1185px;top:958px;width:1.5px;height:158px;background:#3a3a3a;"></div>
<div style="left:1261px;top:170px;width:1.5px;height:216px;background:#3a3a3a;"></div>
<div style="left:1261px;top:1010px;width:1.5px;height:106px;background:#3a3a3a;"></div>
<div style="left:1337px;top:282px;width:1.5px;height:52px;background:#3a3a3a;"></div>
<div style="left:1337px;top:1062px;width:1.5px;height:54px;background:#3a3a3a;"></div>
<div style="left:937.2px;top:170px;width:1.6px;height:946px;background:#555555;"></div>
<svg style="left:926px;top:246px;" width="24" height="30" viewBox="0 0 24 30"><path d="M1.5 1.5H22.5V17L12 27L1.5 17Z" fill="#2b2b2b" stroke="#5f5f5f" stroke-width="2.1"/><path d="M6.500 12.500H17.500" stroke="#5f5f5f" stroke-width="2"/></svg>
<svg style="left:926px;top:714px;" width="24" height="30" viewBox="0 0 24 30"><path d="M1.5 1.5H22.5V17L12 27L1.5 17Z" fill="#2b2b2b" stroke="#5f5f5f" stroke-width="2.1"/><path d="M6.500 12.500H17.500" stroke="#5f5f5f" stroke-width="2"/></svg>
<svg style="left:926px;top:922px;" width="24" height="30" viewBox="0 0 24 30"><path d="M1.5 1.5H22.5V17L12 27L1.5 17Z" fill="#2b2b2b" stroke="#5f5f5f" stroke-width="2.1"/><path d="M6.500 12.500H17.500" stroke="#5f5f5f" stroke-width="2"/></svg>
<svg style="left:926px;top:974px;" width="24" height="30" viewBox="0 0 24 30"><path d="M1.5 1.5H22.5V17L12 27L1.5 17Z" fill="#2b2b2b" stroke="#5f5f5f" stroke-width="2.1"/><path d="M6.500 12.500H17.500" stroke="#5f5f5f" stroke-width="2"/></svg>
<svg style="left:926px;top:1026px;" width="24" height="30" viewBox="0 0 24 30"><path d="M1.5 1.5H22.5V17L12 27L1.5 17Z" fill="#2b2b2b" stroke="#5f5f5f" stroke-width="2.1"/><path d="M6.500 12.500H17.500" stroke="#5f5f5f" stroke-width="2"/></svg>
<svg style="left:926px;top:344.5px;" width="24" height="30" viewBox="0 0 24 30"><path d="M1.5 27.5H22.5V12L12 2L1.5 12Z" fill="#2b2b2b" stroke="#5f5f5f" stroke-width="2.1"/><path d="M6.500 16.500H17.500" stroke="#5f5f5f" stroke-width="2"/></svg>
<svg style="left:926px;top:396.5px;" width="24" height="30" viewBox="0 0 24 30"><path d="M1.5 27.5H22.5V12L12 2L1.5 12Z" fill="#2b2b2b" stroke="#5f5f5f" stroke-width="2.1"/><path d="M6.500 16.500H17.500" stroke="#5f5f5f" stroke-width="2"/></svg>
<svg style="left:926px;top:448.5px;" width="24" height="30" viewBox="0 0 24 30"><path d="M1.5 27.5H22.5V12L12 2L1.5 12Z" fill="#2b2b2b" stroke="#5f5f5f" stroke-width="2.1"/><path d="M6.500 16.500H17.500" stroke="#5f5f5f" stroke-width="2"/></svg>
<svg style="left:926px;top:604.5px;" width="24" height="30" viewBox="0 0 24 30"><path d="M1.5 27.5H22.5V12L12 2L1.5 12Z" fill="#2b2b2b" stroke="#5f5f5f" stroke-width="2.1"/><path d="M6.500 16.500H17.500" stroke="#5f5f5f" stroke-width="2"/></svg>
<div style="left:1331.5px;top:698px;width:323.0px;height:52px;background:#344134;"></div>
<div style="left:0;top:170px;width:2814px;height:946px;overflow:hidden;"><div style="left:0;top:-170px;width:2814px;height:1116px;">
<div class="c" style="left:768.5px;top:180px;color:#606366;font-size:32.3px;letter-spacing:-1.683px;margin-top:1.6px;">314</div>
<div class="c" style="left:768.5px;top:232px;color:#606366;font-size:32.3px;letter-spacing:-1.683px;margin-top:1.6px;">315</div>
<div class="c" style="left:768.5px;top:284px;color:#606366;font-size:32.3px;letter-spacing:-1.683px;margin-top:1.6px;">316</div>
<div class="c" style="left:768.5px;top:336px;color:#606366;font-size:32.3px;letter-spacing:-1.683px;margin-top:1.6px;">317</div>
<div class="c" style="left:768.5px;top:388px;color:#606366;font-size:32.3px;letter-spacing:-1.683px;margin-top:1.6px;">318</div>
<div class="c" style="left:768.5px;top:440px;color:#606366;font-size:32.3px;letter-spacing:-1.683px;margin-top:1.6px;">319</div>
<div class="c" style="left:768.5px;top:492px;color:#606366;font-size:32.3px;letter-spacing:-1.683px;margin-top:1.6px;">320</div>
<div class="c" style="left:768.5px;top:544px;color:#606366;font-size:32.3px;letter-spacing:-1.683px;margin-top:1.6px;">321</div>
<div class="c" style="left:768.5px;top:596px;color:#606366;font-size:32.3px;letter-spacing:-1.683px;margin-top:1.6px;">322</div>
<div class="c" style="left:768.5px;top:648px;color:#606366;font-size:32.3px;letter-spacing:-1.683px;margin-top:1.6px;">323</div>
<div class="c" style="left:768.5px;top:700px;color:#a4a3a3;font-size:32.3px;letter-spacing:-1.683px;margin-top:1.6px;">324</div>
<div class="c" style="left:768.5px;top:752px;color:#606366;font-size:32.3px;letter-spacing:-1.683px;margin-top:1.6px;">325</div>
<div class="c" style="left:768.5px;top:804px;color:#606366;font-size:32.3px;letter-spacing:-1.683px;margin-top:1.6px;">326</div>
<div class="c" style="left:768.5px;top:856px;color:#606366;font-size:32.3px;letter-spacing:-1.683px;margin-top:1.6px;">327</div>
<div class="c" style="left:768.5px;top:908px;color:#606366;font-size:32.3px;letter-spacing:-1.683px;margin-top:1.6px;">328</div>
<div class="c" style="left:768.5px;top:960px;color:#606366;font-size:32.3px;letter-spacing:-1.683px;margin-top:1.6px;">329</div>
<div class="c" style="left:768.5px;top:1012px;color:#606366;font-size:32.3px;letter-spacing:-1.683px;margin-top:1.6px;">330</div>
<div class="c" style="left:768.5px;top:1064px;color:#606366;font-size:32.3px;letter-spacing:-1.683px;margin-top:1.6px;">331</div>
<div class="c" style="left:1333.0px;top:180px;">checkedDestroyMethods.add(element)<span style="color:#cc7832;">;</span></div>
<div class="c" style="left:1333.0px;top:232px;"><span style="color:#cc7832;">if</span> (<span style="color:#9876aa;">logger</span>.isTraceEnabled()) {</div>
<div class="c" style="left:1409.0px;top:284px;"><span style="color:#9876aa;">logger</span>.trace(<span style="display:inline-block;width:53.5px;height:52px;vertical-align:top;position:relative;letter-spacing:0;top:-2px;"><span style="position:absolute;left:3px;top:5px;width:45px;height:42px;background:#3b3b3b;border-radius:7px;"></span><span style="position:absolute;left:11px;top:12px;font-family:'Liberation Sans', sans-serif;font-size:27px;line-height:1;color:#787878;transform:scaleX(1.12);transform-origin:0 0;">o:</span></span><span style="color:#6a8759;">&quot;Registered destroy method on class [&quot;</span> + <span style="color:#cc7832;">this</span>.<span style="color:#9876aa;">targetClass</span>.getName() + &quot;]: &quot; + element);</div>
<div class="c" style="left:1333.0px;top:336px;">}</div>
<div class="c" style="left:1257.0px;top:388px;">}</div>
<div class="c" style="left:1181.0px;top:440px;">}</div>
<div class="c" style="left:1181.0px;top:492px;"><span style="color:#cc7832;">this</span>.<span style="color:#9876aa;">checkedInitMethods</span> = checkedInitMethods<span style="color:#cc7832;">;</span></div>
<div class="c" style="left:1181.0px;top:544px;"><span style="color:#cc7832;">this</span>.<span style="color:#9876aa;">checkedDestroyMethods</span> = checkedDestroyMethods<span style="color:#cc7832;">;</span></div>
<div class="c" style="left:1105.0px;top:596px;">}</div>
<div class="c" style="left:1105.0px;top:700px;"><span style="color:#cc7832;">public void </span><span style="color:#ffc66d;">invokeInitMethods</span>(Object target<span style="color:#cc7832;">,</span> String beanName) <span style="color:#cc7832;">throws</span> Throwable {</div>
<div class="c" style="left:1181.0px;top:752px;">Collection&lt;LifecycleElement&gt; checkedInitMethods = <span style="color:#cc7832;">this</span>.<span style="color:#9876aa;">checkedInitMethods</span><span style="color:#cc7832;">;</span></div>
<div class="c" style="left:1181.0px;top:804px;">Collection&lt;LifecycleElement&gt; initMethodsToIterate =</div>
<div class="c" style="left:1333.0px;top:856px;">(checkedInitMethods != <span style="color:#cc7832;">null</span> ? checkedInitMethods : <span style="color:#cc7832;">this</span>.<span style="color:#9876aa;">initMethods</span>)<span style="color:#cc7832;">;</span></div>
<div class="c" style="left:1181.0px;top:908px;"><span style="color:#cc7832;">if</span> (!initMethodsToIterate.isEmpty()) {</div>
<div class="c" style="left:1257.0px;top:960px;"><span style="color:#cc7832;">for</span> (LifecycleElement element : initMethodsToIterate) {</div>
<div class="c" style="left:1333.0px;top:1012px;"><span style="color:#cc7832;">if</span> (<span style="color:#9876aa;">logger</span>.isTraceEnabled()) {</div>
<div class="c" style="left:1409.0px;top:1064px;"><span style="color:#9876aa;">logger</span>.trace(<span style="display:inline-block;width:53.5px;height:52px;vertical-align:top;position:relative;letter-spacing:0;top:-2px;"><span style="position:absolute;left:3px;top:5px;width:45px;height:42px;background:#3b3b3b;border-radius:7px;"></span><span style="position:absolute;left:11px;top:12px;font-family:'Liberation Sans', sans-serif;font-size:27px;line-height:1;color:#787878;transform:scaleX(1.12);transform-origin:0 0;">o:</span></span><span style="color:#6a8759;">&quot;Invoking init method on bean &#x27;&quot;</span> + beanName + <span style="color:#6a8759;">&quot;&#x27;: &quot;</span> + element);</div>
</div></div>
<svg style="left:872px;top:706px;" width="36" height="36" viewBox="0 0 36 36"><circle cx="12.5" cy="18" r="10.3" fill="#3895b9"/><circle cx="12.5" cy="18" r="4.3" fill="none" stroke="#23414f" stroke-width="2.4"/><path d="M26.5 2V24" stroke="#c4c4c4" stroke-width="2.6"/><path d="M20 23.5H33.5L26.7 33.5Z" fill="#c4c4c4"/></svg>
<div style="left:954px;top:1098px;width:1350px;height:16px;background:rgba(128,128,128,0.42);"></div>
<div style="left:2796.5px;top:850px;width:16px;height:68px;background:#4f4f4f;"></div>
<div style="left:2812.3px;top:305px;width:1.7px;height:10px;background:#4f86c6;"></div>
<div style="left:2786.5px;top:474.5px;width:28px;height:3.5px;background:#067a1e;"></div>
<div style="left:2786.5px;top:894.5px;width:28px;height:3.5px;background:#067a1e;"></div>
<svg style="left:2788px;top:173px;" width="26" height="22" viewBox="0 0 26 22"><path d="M2.5 11L9.5 17.5L23 3.5" stroke="#3fa54b" stroke-width="4" fill="none"/></svg>
<div style="left:2814px;top:116px;width:2px;height:1491px;background:#323436;"></div>
<div style="left:2816px;top:116px;width:41px;height:1491px;background:#3c3f41;"></div>
<span class="t" style="left:2823px;top:129.57px;font-size:33px;color:#c3c3c3;font-family:'Liberation Sans', sans-serif;font-weight:700;font-style:italic;transform:scaleX(0.95);">m</span>
<span class="t" style="left:2848.0px;top:172px;font-size:26px;color:#bbbbbb;font-family:'Liberation Sans', sans-serif;transform:rotate(90deg) scaleX(0.8846);">Maven</span>
<svg style="left:2825px;top:285px;" width="24" height="24" viewBox="0 0 24 24"><circle cx="11.9" cy="11.9" r="11.4" fill="#afb1b3"/><path d="M15.3 4.2L20.7 10.2V14.6L18.3 17.7L15.3 15.3V11.9L7.9 11.6L7.6 10.2L11.3 9.2V6.5L14.3 5.9Z" fill="#3c3f41"/><path d="M3.2 10.2L10.9 20.4L8.6 20L5.2 17L3.3 12.9Z" fill="#3c3f41"/></svg>
<span class="t" style="left:2848.0px;top:318px;font-size:26px;color:#bbbbbb;font-family:'Liberation Sans', sans-serif;transform:rotate(90deg) scaleX(0.9147);">RestfulTool</span>
<svg style="left:2825px;top:479px;" width="24" height="28" viewBox="0 0 24 28"><g fill="#afb1b3"><ellipse cx="12" cy="6.3" rx="11.2" ry="5.4"/><path d="M0.8 9.6C2 15.6 22 15.6 23.2 9.6V13.6C22 19.8 2 19.8 0.8 13.6Z"/><path d="M0.8 15.9C2 21.9 22 21.9 23.2 15.9V19.6C22 25.8 2 25.8 0.8 19.6Z"/><path d="M0.8 21.9C2 27.6 22 27.6 23.2 21.9V21.2C23.2 28.4 0.8 28.4 0.8 21.2Z"/><path d="M0.8 21.9C2 27.9 22 27.9 23.2 21.9C23 28.6 1 28.6 0.8 21.9Z"/></g></svg>
<span class="t" style="left:2848.0px;top:516px;font-size:26px;color:#bbbbbb;font-family:'Liberation Sans', sans-serif;transform:rotate(90deg) scaleX(0.8559);">Database</span>
<svg style="left:2824px;top:648px;" width="26" height="28" viewBox="0 0 26 28"><g fill="#afb1b3"><circle cx="12.9" cy="6.8" r="4.2"/><path d="M12.9 13C15 13 17.8 16.5 17.8 20.6C17.8 24 15.6 26.2 12.9 26.2C10.2 26.2 8 24 8 20.6C8 16.5 10.8 13 12.900 13Z"/></g><g stroke="#afb1b3" stroke-width="1.8" fill="none"><path d="M9.6 11.2C6.5 10 4.500 8 3.500 6.100M16.3 11.2C19.400 10 21.400 8 22.300 6.100M3.200 13.500H22.900M10.200 16.200L3.800 20V26M15.600 16.200L22 20V26"/></g></svg>
<span class="t" style="left:2848.0px;top:685.5px;font-size:26px;color:#bbbbbb;font-family:'Liberation Sans', sans-serif;transform:rotate(90deg) scaleX(0.9487);">Ant</span>
<div style="left:46px;top:1116px;width:2768px;height:2px;background:#2b2d2e;"></div>
<div style="left:46px;top:1118px;width:2768px;height:52px;background:#3b4754;"></div>
<div style="left:46px;top:1170px;width:2768px;height:2px;background:#323436;"></div>
<div style="left:46px;top:1172px;width:2768px;height:435px;background:#3c3f41;"></div>
<div style="left:128px;top:1166px;width:562px;height:6px;background:#4a88c7;"></div>
<span class="t" style="left:57.8px;top:1131.99px;font-size:26px;color:#bbbbbb;font-family:'Liberation Sans', sans-serif;transform:scaleX(0.9603);">Find:</span>
<span class="t" style="left:151.8px;top:1131.99px;font-size:26px;color:#bbbbbb;font-family:'Liberation Sans', sans-serif;transform:scaleX(0.9882);">Usages of invokeInitMethods(Object, Stri...</span>
<svg style="left:652px;top:1137px;" width="18" height="18" viewBox="0 0 18 18"><path d="M1.5 1.5L16.5 16.5M16.5 1.5L1.5 16.5" stroke="#75808c" stroke-width="2.2"/></svg>
<svg style="left:2721.7px;top:1129.7px;" width="28.6" height="28.6" viewBox="0 0 28.6 28.6"><path fill-rule="evenodd" d="M11.44 2.34L17.16 2.34L17.51 5.78L20.07 7.26L23.23 5.84L26.09 10.80L23.28 12.82L23.28 15.78L26.09 17.80L23.23 22.76L20.07 21.34L17.51 22.82L17.16 26.26L11.44 26.26L11.09 22.82L8.53 21.34L5.37 22.76L2.51 17.80L5.32 15.78L5.32 12.82L2.51 10.80L5.37 5.84L8.53 7.26L11.09 5.78Z M19.59 14.3a5.29 5.29 0 1 0 -10.58 0a5.29 5.29 0 1 0 10.58 0Z" fill="#afb1b3" stroke="#afb1b3" stroke-width="1.2" stroke-linejoin="round"/></svg>
<div style="left:2776.5px;top:1142px;width:24.4px;height:4.1px;background:#afb1b3;"></div>
<div style="left:102px;top:1172px;width:2px;height:435px;background:#323436;"></div>
<svg style="left:60px;top:1190px;" width="30" height="24" viewBox="0 0 30 24"><path d="M2 2L14.5 12L2 22Z" fill="#4aa64f"/><path d="M15.5 2L28 12L15.5 22Z" fill="#4aa64f"/></svg>
<svg style="left:62px;top:1240px;" width="26" height="28" viewBox="0 0 26 28"><path d="M13 26.500V5" stroke="#afb1b3" stroke-width="3.800"/><path d="M3.500 13.500L13 4L22.500 13.500" stroke="#afb1b3" stroke-width="3.800" fill="none"/></svg>
<svg style="left:62px;top:1292px;" width="26" height="28" viewBox="0 0 26 28"><path d="M13 1.500V23" stroke="#5f6163" stroke-width="3.800"/><path d="M3.500 14.500L13 24L22.500 14.500" stroke="#5f6163" stroke-width="3.800" fill="none"/></svg>
<div style="left:54px;top:1338px;width:40px;height:2px;background:#55585a;"></div>
<svg style="left:62px;top:1360px;" width="32" height="32" viewBox="0 0 32 32"><g fill="#afb1b3"><rect x="2" y="2.5" width="8" height="8"/><rect x="13" y="2.5" width="8" height="8"/><rect x="2" y="13.5" width="8" height="8"/><rect x="13" y="13.5" width="8" height="8"/><path d="M18 25H30L24 30.5Z" fill="#e0e0e0"/></g></svg>
<div style="left:52px;top:1402px;width:44px;height:44px;background:#5c6164;border-radius:5px;"></div>
<div style="left:52px;top:1454px;width:44px;height:44px;background:#5c6164;border-radius:5px;"></div>
<div style="left:52px;top:1506px;width:44px;height:44px;background:#5c6164;border-radius:5px;"></div>
<svg style="left:58px;top:1408px;" width="32" height="32" viewBox="0 0 32 32"><path d="M12.200 10.300L18.800 3.500L29.500 15.800L18.800 28.200L12.200 21" stroke="#4aa64f" stroke-width="4" fill="none" stroke-linejoin="miter"/><path d="M16.500 15.800H9" stroke="#c4c4c4" stroke-width="3.400"/><path d="M10.300 10L1.800 15.800L10.300 21.600Z" fill="#c4c4c4"/></svg>
<svg style="left:58px;top:1460px;" width="32" height="32" viewBox="0 0 32 32"><path d="M12.200 10.300L18.800 3.500L29.500 15.800L18.800 28.200L12.200 21" stroke="#db5860" stroke-width="4" fill="none" stroke-linejoin="miter"/><path d="M1.800 15.800H9.500" stroke="#c4c4c4" stroke-width="3.400"/><path d="M8.200 10L16.700 15.800L8.200 21.600Z" fill="#c4c4c4"/></svg>
<span class="t" style="left:65.5px;top:1512px;font-size:34px;color:#c4c4c4;font-family:'Liberation Mono', monospace;font-weight:700;">i</span>
<span class="t" style="left:66.3px;top:1572.84px;font-size:25px;color:#afb1b3;font-family:'Liberation Sans', sans-serif;transform:scaleX(1.0118);">››</span>
<div style="left:104px;top:1334px;width:2710px;height:40px;background:#4b6eaf;"></div>
<svg style="left:111px;top:1184.25px;" width="17.5" height="15.5" viewBox="0 0 17.5 15.5"><path d="M0 0H17.5L8.75 15.5Z" fill="#a5a5a5"/></svg>
<span class="t" style="left:146.3px;top:1178.99px;font-size:26px;color:#bbbbbb;font-family:'Liberation Sans', sans-serif;font-weight:700;transform:scaleX(1.0511);">Method</span>
<svg style="left:176.0px;top:1214.0px;" width="40" height="40" viewBox="0 0 40 40"><circle cx="20.0" cy="20.0" r="13.8" fill="#b7687d"/><text x="20.0" y="25.0" text-anchor="middle" font-family="Liberation Sans, sans-serif" font-size="19" fill="#3f2329">m</text></svg>
<svg style="left:216px;top:1222px;" width="22" height="24" viewBox="0 0 22 24"><path d="M4.5 11V7.5a3.3 3.3 0 0 1 6.6 0V9" stroke="#5fa344" stroke-width="2.2" fill="none"/><rect x="6.5" y="10.5" width="12" height="9.5" fill="#5fa344"/></svg>
<span class="t" style="left:249.8px;top:1219.59px;font-size:26px;color:#bbbbbb;font-family:'Liberation Sans', sans-serif;transform:scaleX(1.0109);">invokeInitMethods(Object, String)</span>
<svg style="left:111px;top:1264.25px;" width="17.5" height="15.5" viewBox="0 0 17.5 15.5"><path d="M0 0H17.5L8.75 15.5Z" fill="#a5a5a5"/></svg>
<span class="t" style="left:146.3px;top:1258.99px;font-size:26px;color:#bbbbbb;font-family:'Liberation Sans', sans-serif;font-weight:700;transform:scaleX(0.9585);">Found usages</span>
<span class="t" style="left:326.3px;top:1258.99px;font-size:26px;color:#7f8183;font-family:'Liberation Sans', sans-serif;font-weight:700;transform:scaleX(0.9763);">1 usage</span>
<svg style="left:147.5px;top:1304.25px;" width="17.5" height="15.5" viewBox="0 0 17.5 15.5"><path d="M0 0H17.5L8.75 15.5Z" fill="#a5a5a5"/></svg>
<svg style="left:176.0px;top:1294.0px;" width="40" height="40" viewBox="0 0 40 40"><circle cx="20.0" cy="20.0" r="13.8" fill="#3e87a3"/><text x="19.6" y="25.7" text-anchor="middle" font-family="Liberation Sans, sans-serif" font-size="16" fill="#22323c" font-weight="700">C</text><g><rect x="24.5" y="27.0" width="13" height="11" fill="#3c3f41"/><path d="M28.5 29.0v-3a2.5 2.5 0 0 1 5 0v3" stroke="#aeb6bc" stroke-width="2" fill="none"/><rect x="26.0" y="28.5" width="10" height="8" fill="#aeb6bc"/></g></svg>
<span class="t" style="left:217.8px;top:1299.59px;font-size:26px;color:#bbbbbb;font-family:'Liberation Sans', sans-serif;transform:scaleX(0.9853);">InitDestroyAnnotationBeanPostProcessor.java</span>
<span class="t" style="left:753.8px;top:1299.59px;font-size:26px;color:#7f8183;font-family:'Liberation Sans', sans-serif;transform:scaleX(0.9484);">1 usage</span>
<span class="t" style="left:254.3px;top:1339.59px;font-size:26px;color:#c4c8d0;font-family:'Liberation Sans', sans-serif;transform:scaleX(0.9861);">157 metadata.</span>
<span class="t" style="left:415.8px;top:1339.59px;font-size:26px;color:#c4c8d0;font-family:'Liberation Sans', sans-serif;font-weight:700;transform:scaleX(1.0206);">invokeInitMethods</span>
<span class="t" style="left:646.3px;top:1339.59px;font-size:26px;color:#c4c8d0;font-family:'Liberation Sans', sans-serif;transform:scaleX(0.9830);">(bean, beanName);</span>
<div style="left:2px;top:1607px;width:2855px;height:1.5px;background:#323436;"></div>
<div style="left:172px;top:1608.5px;width:146px;height:42px;background:#2d2f30;"></div>
<div style="left:2px;top:1650px;width:2855px;height:1.2px;background:#45484a;"></div>
<svg style="left:66px;top:1617px;" width="24" height="28" viewBox="0 0 24 28"><path d="M3.500 1V27" stroke="#afb1b3" stroke-width="3.800"/><path d="M3.500 18.500H14.500V8" stroke="#afb1b3" stroke-width="3.800" fill="none"/><path d="M6.500 11L14.500 2L22.500 11Z" fill="#afb1b3"/></svg>
<span class="t" style="left:96.8px;top:1617.99px;font-size:26px;color:#bbbbbb;font-family:'Liberation Sans', sans-serif;transform:scaleX(0.9226);"><u>9</u>: Git</span>
<svg style="left:194px;top:1618px;" width="28" height="28" viewBox="0 0 28 28"><circle cx="10.500" cy="10.500" r="7.300" stroke="#c4c4c4" stroke-width="4" fill="none"/><path d="M16 16L25 25" stroke="#c4c4c4" stroke-width="4.800"/></svg>
<span class="t" style="left:227.8px;top:1617.99px;font-size:26px;color:#ffffff;font-family:'Liberation Sans', sans-serif;transform:scaleX(0.9025);"><u>3</u>: Find</span>
<svg style="left:344px;top:1620px;" width="18" height="22" viewBox="0 0 18 22"><path d="M0.5 0.5L16 10.5L0.5 20.5Z" fill="#afb1b3"/></svg>
<span class="t" style="left:372.8px;top:1617.99px;font-size:26px;color:#bbbbbb;font-family:'Liberation Sans', sans-serif;transform:scaleX(0.8857);"><u>4</u>: Run</span>
<svg style="left:485px;top:1620px;" width="24" height="22" viewBox="0 0 24 22"><g fill="#afb1b3"><rect x="1" y="1.5" width="4" height="3.6"/><rect x="7" y="1.5" width="14.5" height="3.6"/><rect x="1" y="8.2" width="4" height="3.6"/><rect x="7" y="8.2" width="14.5" height="3.6"/><rect x="1" y="15" width="4" height="3.6"/><rect x="7" y="15" width="14.5" height="3.6"/></g></svg>
<span class="t" style="left:515.8px;top:1617.99px;font-size:26px;color:#bbbbbb;font-family:'Liberation Sans', sans-serif;transform:scaleX(0.8951);"><u>6</u>: TODO</span>
<svg style="left:653px;top:1620px;" width="26" height="22" viewBox="0 0 26 22"><g fill="#afb1b3"><rect x="1" y="1.5" width="22" height="3.8"/><rect x="1" y="8.5" width="13" height="3.8"/><rect x="1" y="15.5" width="18" height="3.8"/></g></svg>
<span class="t" style="left:684.8px;top:1617.99px;font-size:26px;color:#bbbbbb;font-family:'Liberation Sans', sans-serif;transform:scaleX(0.8755);"><u>0</u>: Messages</span>
<svg style="left:855px;top:1617px;" width="30" height="30" viewBox="0 0 30 30"><path d="M1 10L10 1L16 3.5L10.5 9.5L27.5 22.5L23 27.5L9 10.5L5 14Z" fill="#afb1b3"/></svg>
<span class="t" style="left:889.8px;top:1617.99px;font-size:26px;color:#bbbbbb;font-family:'Liberation Sans', sans-serif;transform:scaleX(0.9517);">Build</span>
<svg style="left:982px;top:1618px;" width="28" height="26" viewBox="0 0 28 26"><path d="M2 19C1 9 10 5 25 2.5C26.5 12 23 23 12.5 23.5C8 23.7 4 22.5 2 19Z" fill="#afb1b3"/><path d="M1 22.5C6 21 12 18 16 13" stroke="#3c3f41" stroke-width="1.6" fill="none"/></svg>
<span class="t" style="left:1015.8px;top:1617.99px;font-size:26px;color:#bbbbbb;font-family:'Liberation Sans', sans-serif;transform:scaleX(0.9293);">Spring</span>
<svg style="left:1130px;top:1619px;" width="24" height="24" viewBox="0 0 24 24"><rect x="0.5" y="0.5" width="22" height="21" fill="#afb1b3"/><path d="M4.5 5.5L10 10L4.5 14.5" stroke="#3c3f41" stroke-width="2" fill="none"/><path d="M11 16.5H18" stroke="#3c3f41" stroke-width="2"/></svg>
<span class="t" style="left:1161.3px;top:1617.99px;font-size:26px;color:#bbbbbb;font-family:'Liberation Sans', sans-serif;transform:scaleX(0.9459);">Terminal</span>
<svg style="left:2655px;top:1617px;" width="30" height="30" viewBox="0 0 30 30"><path d="M14 1A13 13 0 1 0 14 27H27.5V14A13 13 0 0 0 14 1Z" fill="#4a9f55"/></svg>
<span class="t" style="left:2662.3px;top:1621.72px;font-size:21px;color:#ffffff;font-family:'Liberation Sans', sans-serif;font-weight:700;transform:scaleX(1.0167);">1</span>
<span class="t" style="left:2690.3px;top:1619.49px;font-size:26px;color:#bbbbbb;font-family:'Liberation Sans', sans-serif;transform:scaleX(0.8949);">Event Log</span>
<svg style="left:13px;top:1660px;" width="26" height="26" viewBox="0 0 26 26"><rect x="5.5" y="1.5" width="19" height="19" fill="none" stroke="#afb1b3" stroke-width="1.8"/><path d="M1.5 5.5V24.5H20.5" stroke="#afb1b3" stroke-width="1.8" fill="none"/></svg>
<span class="t" style="left:55.8px;top:1657.99px;font-size:26px;color:#bbbbbb;font-family:'Liberation Sans', sans-serif;transform:scaleX(0.9774);">Build completed successfully in 1 s 490 ms (today 13:45)</span>
<span class="t" style="left:2310.3px;top:1658.99px;font-size:26px;color:#bbbbbb;font-family:'Liberation Sans', sans-serif;transform:scaleX(0.9463);">324:32</span>
<span class="t" style="left:2410.8px;top:1658.99px;font-size:26px;color:#888a8c;font-family:'Liberation Sans', sans-serif;transform:scaleX(0.8067);">LF</span>
<span class="t" style="left:2460.3px;top:1658.99px;font-size:26px;color:#888a8c;font-family:'Liberation Sans', sans-serif;transform:scaleX(0.9351);">UTF-8</span>
<svg style="left:870px;top:1070px;" width="570" height="280" viewBox="0 0 570 280"><path d="M554 7L23.5 259.5L28 267.5Z" fill="#fa3838"/><path d="M11 271H30L23 257.5Z" fill="#fa3838"/></svg>
<div style="left:2567px;top:1652.3px;width:291px;height:41px;background:#ffffff;"></div>
<div style="left:2567px;top:1652.3px;width:291px;height:1px;background:#c5d8ee;"></div>
<svg style="left:2500px;top:1636px;" width="90" height="60" viewBox="0 0 90 60"><defs><linearGradient id="sg" x1="0" y1="1" x2="1" y2="0"><stop offset="0" stop-color="#f2541a"/><stop offset="1" stop-color="#f9733c"/></linearGradient></defs><g transform="translate(12.8,19.6) rotate(-14.7)"><rect x="0" y="0" width="52.5" height="60" rx="5.5" fill="url(#sg)"/></g><path d="M62.3 21.8C55 20.600 40 21.500 32.400 27C26 31.500 22.500 37 28.500 39.500C34 41.500 50 38 62 38.700C70.500 39.300 70.500 46.500 63 51.500C56 56.500 40 57.500 29 53.400" stroke="#ffffff" stroke-width="8.6" fill="none"/></svg>
<span class="t" style="left:2589px;top:1665.3px;font-size:28.5px;color:#0a6fe0;font-family:'Liberation Sans', 'Noto Sans CJK SC', sans-serif;font-weight:700;">中</span>
<svg style="left:2636px;top:1660px;" width="222" height="33" viewBox="0 0 222 33"><defs><radialGradient id="glow" cx="0.5" cy="0.5" r="0.5"><stop offset="0" stop-color="#fff3c8" stop-opacity="0.9"/><stop offset="0.6" stop-color="#dfeaff" stop-opacity="0.6"/><stop offset="1" stop-color="#ffffff" stop-opacity="0"/></radialGradient></defs><circle cx="206" cy="18" r="21" fill="url(#glow)"/><g fill="#0a6fe0"><circle cx="9.6" cy="12.6" r="3.8"/><path d="M19.5 20.500C19.500 17 27.500 17 27.500 22.500C27.500 27 23.500 31 19.500 33.500L18.300 32.300C21 29.500 22 27.500 21.500 25.500C20.300 24.800 19.500 22.500 19.500 20.500Z"/><rect x="59" y="2.8" width="9.6" height="18" rx="4.8"/><path d="M52.4 15.500A11 11.500 0 0 0 74.300 15.500" stroke="#0a6fe0" stroke-width="3.300" fill="none"/><rect x="62.200" y="27" width="3.300" height="6"/><rect x="57.800" y="31.600" width="12" height="1.400"/><rect x="98" y="6.800" width="28.600" height="23.300" rx="4"/><path d="M146.400 10L155 5.600C158 9.200 163 9.200 166 5.600L174.900 10L171.500 17.500L168 16V31.800H153V16L149.800 17.500Z"/></g><g fill="#ffffff"><rect x="102.300" y="11.200" width="5.400" height="5"/><rect x="109.600" y="11.200" width="5.400" height="5"/><rect x="116.900" y="11.200" width="5.400" height="5"/><rect x="102.300" y="19.200" width="8" height="6.500"/><rect x="112.300" y="19.200" width="10" height="6.500"/><circle cx="8.300" cy="11.300" r="1.100"/></g><g><rect x="195" y="8" width="11.600" height="11.600" rx="3.600" fill="#5b6ee8"/><rect x="209" y="8" width="12.500" height="11.600" rx="3.600" fill="#4a6cf7"/><rect x="195" y="21.600" width="11.600" height="12" rx="3.600" fill="#c9678f"/><rect x="209" y="21.600" width="12.500" height="12" rx="3.600" fill="#9a63c9"/><rect x="213" y="11.500" width="4.600" height="4.600" fill="#ffffff"/></g></svg>
<span class="t" style="left:2631.6000000000004px;top:1665.34px;font-size:18.5px;color:rgba(105,105,105,0.8);font-family:'Liberation Sans', 'Noto Sans CJK SC', sans-serif;transform:scaleX(1.0180);text-shadow:0 0 2px rgba(255,255,255,0.9),1px 1px 0 rgba(255,255,255,0.7);">CSDN @只因为你而温柔</span>
</div></body></html>
